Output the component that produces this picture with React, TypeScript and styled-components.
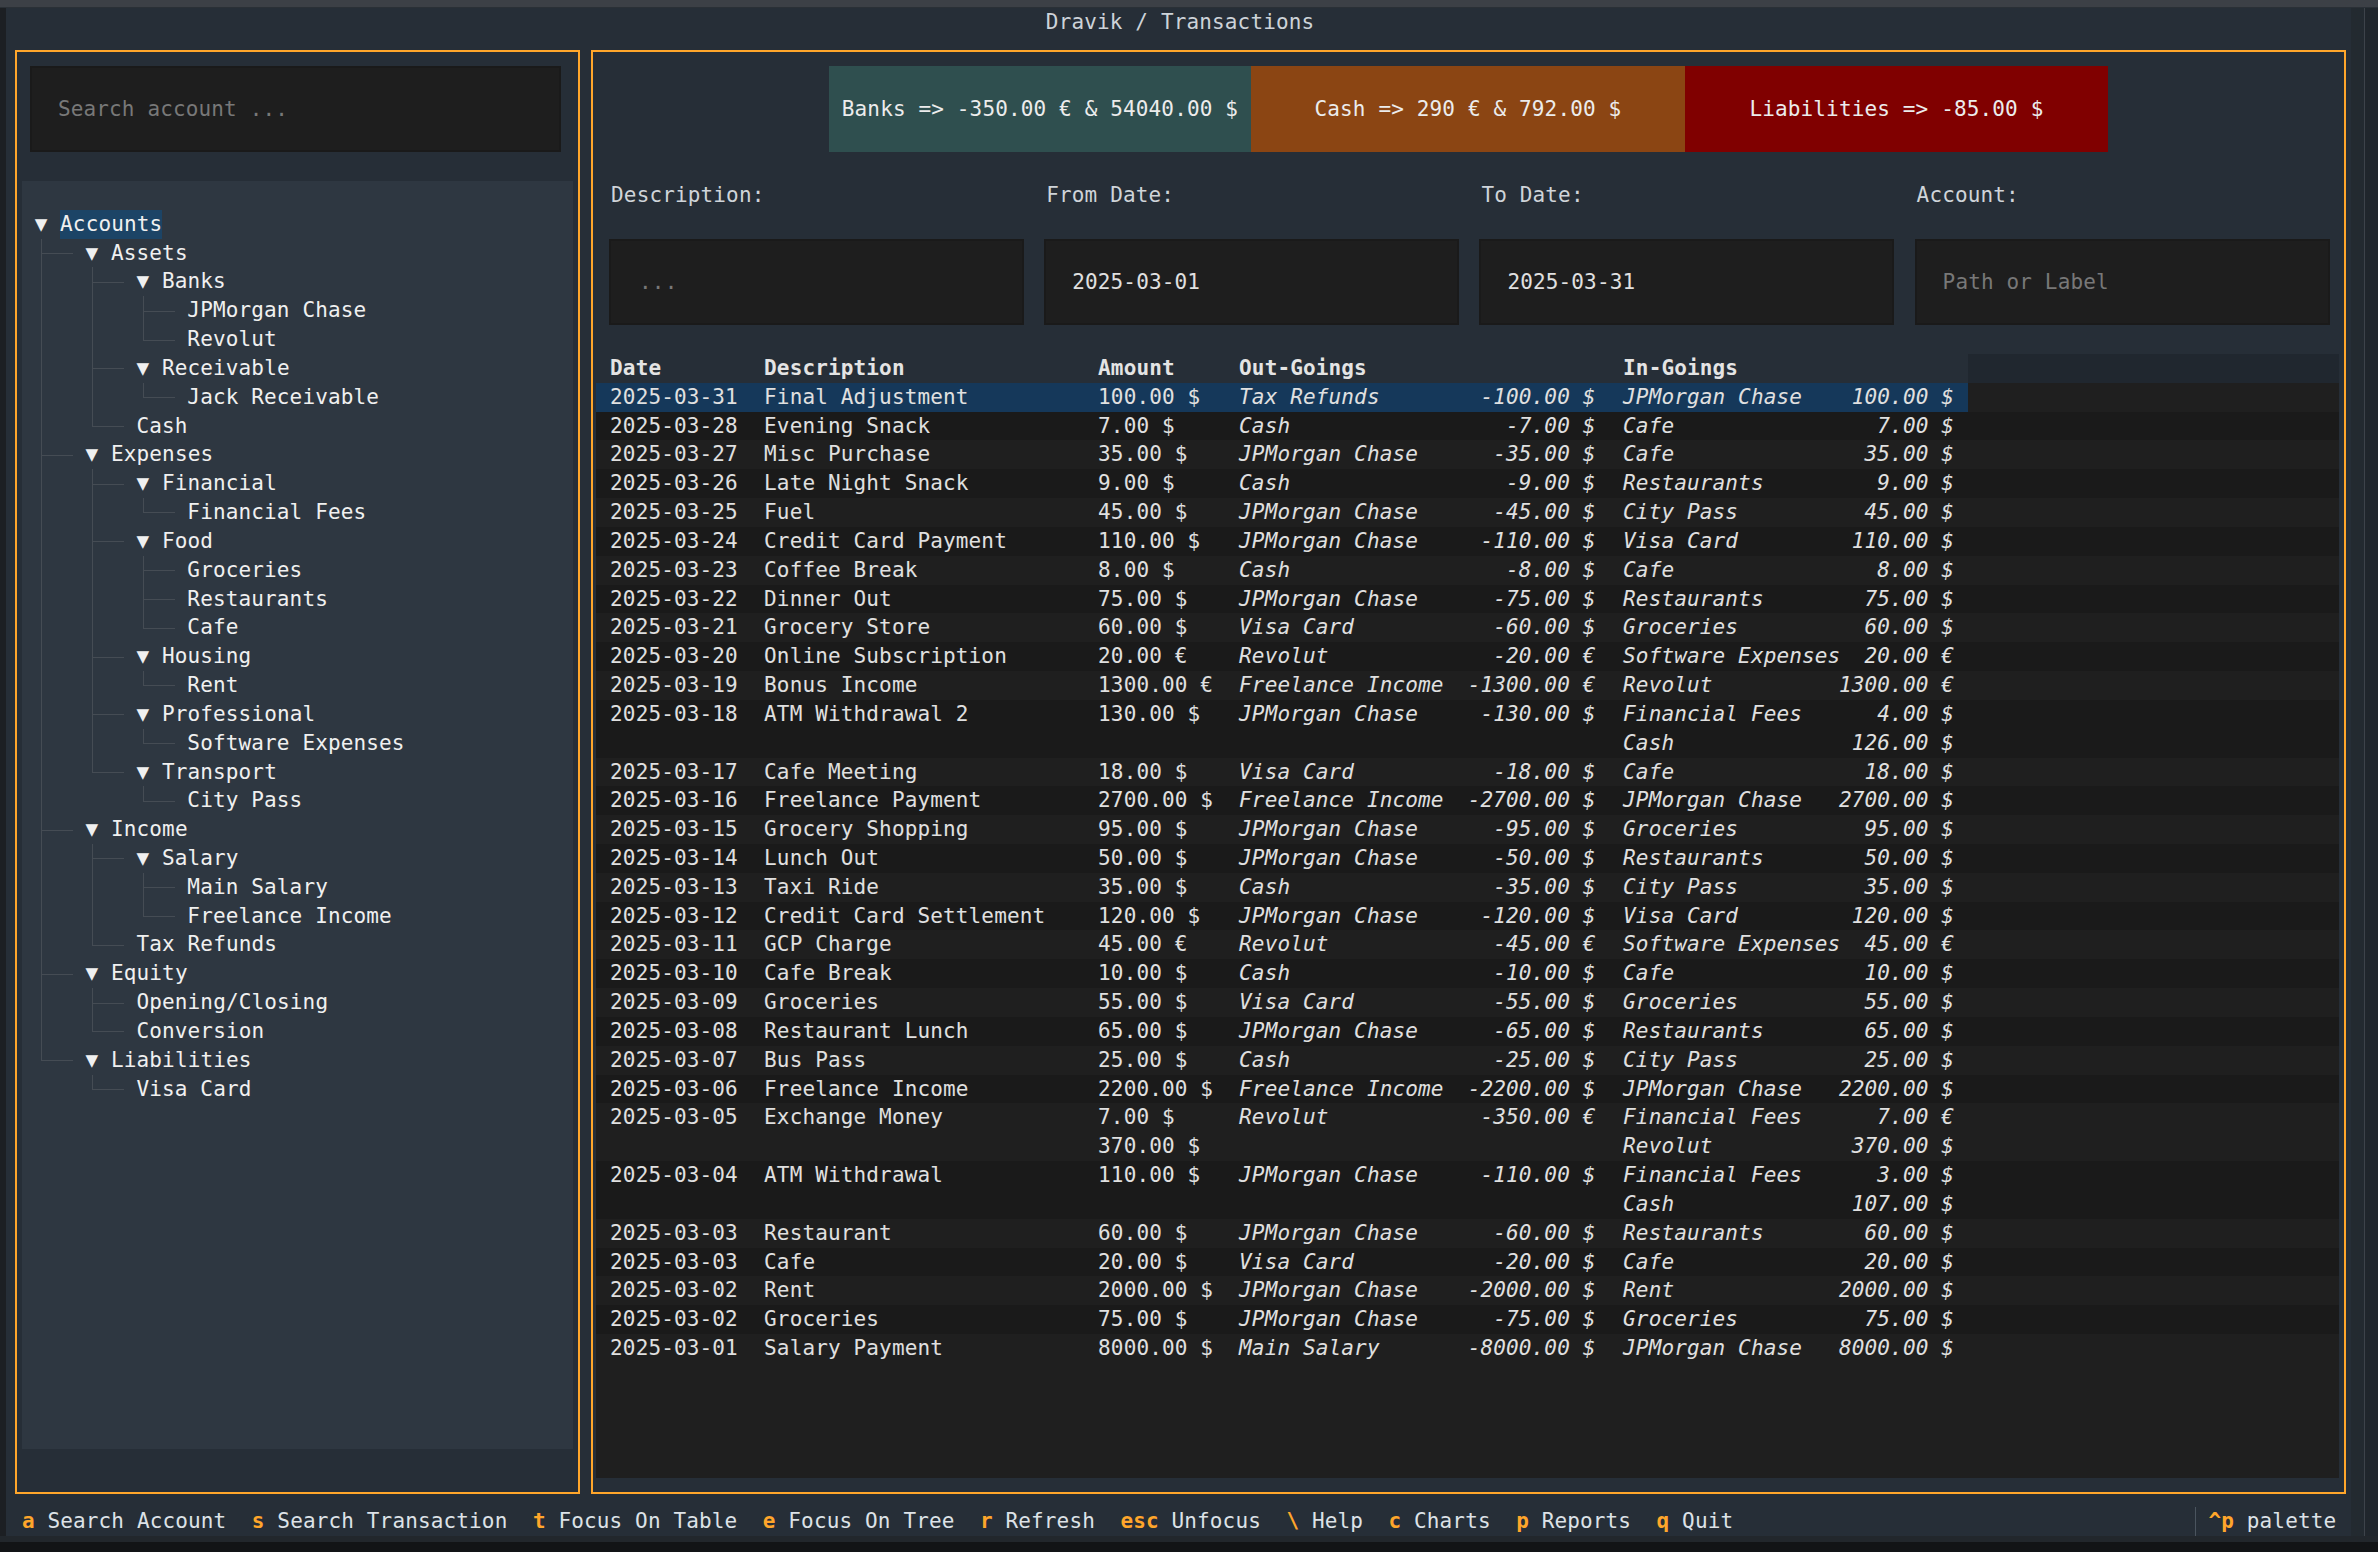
import React from 'react';
import styled, { createGlobalStyle, css } from 'styled-components';

// terminal cell metrics measured off the screenshot
const W = 12.73;
const H = 28.83;
const cw = (n: number) => `${(n * W).toFixed(2)}px`;
const rh = (n: number) => `${(n * H).toFixed(2)}px`;

const ORANGE = '#ffa62b';
const APP_BG = '#262e37';

const GlobalStyle = createGlobalStyle`
  html, body {
    margin: 0;
    padding: 0;
    background: #15171a;
  }
  body {
    font-family: "DejaVu Sans Mono", "Liberation Mono", monospace;
    font-size: 21px;
    letter-spacing: 0.14px;
    color: #e0e0e0;
  }
  #root {
    width: 2378px;
    height: 1552px;
    overflow: hidden;
  }
`;

const Screen = styled.div`
  width: 2378px;
  height: 1552px;
  display: flex;
  flex-direction: column;
  background: #15171a;
`;

const TopChrome = styled.div`
  height: 8px;
  flex: none;
  background: #3c4046;
  border-bottom: 1px solid #2a3036;
  box-sizing: border-box;
`;

const Middle = styled.div`
  display: flex;
  height: 1528px;
  flex: none;
`;

const LeftEdge = styled.div`
  width: 6px;
  flex: none;
  background: #1c1f23;
`;

const RightEdge = styled.div`
  flex: 1;
  display: flex;
  background: #20262c;
  border-left: 13px solid #232a30;
`;

const EdgeLine = styled.div`
  width: 1px;
  background: #3d434a;
  margin-right: 10px;
`;

const BottomChrome = styled.div`
  flex: 1;
  background: #121416;
  border-top: 6px solid #22272c;
`;

const Terminal = styled.div`
  width: 2345px;
  flex: none;
  padding: 0 0 0 3.2px;
  box-sizing: border-box;
  background: ${APP_BG};
  display: flex;
  flex-direction: column;
`;

const TitleBar = styled.div`
  height: ${rh(1)};
  line-height: ${rh(1)};
  text-align: center;
  color: #cdd3d9;
  white-space: pre;
`;

const Main = styled.div`
  display: flex;
  height: ${rh(51)};
`;

const Panel = styled.div<{ $cols: number }>`
  width: ${(p) => cw(p.$cols)};
  height: 100%;
  flex: none;
  box-sizing: border-box;
  padding: ${H / 2 - 1}px ${W / 2 - 1}px;
`;

const Frame = styled.div`
  height: 100%;
  box-sizing: border-box;
  border: 2px solid ${ORANGE};
  padding: ${H / 2 - 1}px ${W / 2 - 1}px;
  display: flex;
  flex-direction: column;
`;

const TextInput = styled.div<{ $placeholder?: boolean; $pad?: number }>`
  height: ${rh(3)};
  flex: none;
  box-sizing: border-box;
  background: #1e1e1e;
  border: 2px solid #1a1a1a;
  display: flex;
  align-items: center;
  padding-left: ${(p) => p.$pad ?? 26}px;
  color: ${(p) => (p.$placeholder ? '#787878' : '#e0e0e0')};
  white-space: pre;
`;

const SearchInput = styled(TextInput)`
  margin: 0 12px 0 8px;
`;

const Gap = styled.div<{ $rows?: number }>`
  height: ${(p) => rh(p.$rows ?? 1)};
  flex: none;
`;

/* ---------- account tree ---------- */

const TreeBox = styled.div`
  height: ${rh(44)};
  flex: none;
  background: #2e3741;
  padding: ${rh(1)} 0 0 ${cw(1)};
  box-sizing: border-box;
  color: #f0f0f0;
`;

const TreeRow = styled.div`
  display: flex;
  height: ${rh(1)};
  line-height: ${rh(1)};
  white-space: pre;
`;

type GuideKind = 'blank' | 'pipe' | 'tee' | 'elbow';

const GUIDE = '#454c54';

const Guide = styled.span<{ $kind: GuideKind }>`
  position: relative;
  flex: none;
  width: ${cw(4)};
  height: 100%;
  ${(p) =>
    p.$kind !== 'blank' &&
    css`
      &::before {
        content: '';
        position: absolute;
        left: ${W / 2}px;
        top: 0;
        width: 1px;
        height: ${p.$kind === 'elbow' ? '50%' : '100%'};
        background: ${GUIDE};
      }
    `}
  ${(p) =>
    (p.$kind === 'tee' || p.$kind === 'elbow') &&
    css`
      &::after {
        content: '';
        position: absolute;
        left: ${W / 2}px;
        top: 50%;
        width: ${W * 2.5}px;
        height: 1px;
        background: ${GUIDE};
      }
    `}
`;

const Toggle = styled.span`
  flex: none;
  width: ${cw(2)};
`;

const NodeLabel = styled.span<{ $active?: boolean }>`
  background: ${(p) => (p.$active ? '#1c4466' : 'transparent')};
`;

type Node = { label: string; children?: Node[] };

const leaf = (label: string): Node => ({ label });

const accounts: Node = {
  label: 'Accounts',
  children: [
    {
      label: 'Assets',
      children: [
        { label: 'Banks', children: [leaf('JPMorgan Chase'), leaf('Revolut')] },
        { label: 'Receivable', children: [leaf('Jack Receivable')] },
        leaf('Cash'),
      ],
    },
    {
      label: 'Expenses',
      children: [
        { label: 'Financial', children: [leaf('Financial Fees')] },
        { label: 'Food', children: [leaf('Groceries'), leaf('Restaurants'), leaf('Cafe')] },
        { label: 'Housing', children: [leaf('Rent')] },
        { label: 'Professional', children: [leaf('Software Expenses')] },
        { label: 'Transport', children: [leaf('City Pass')] },
      ],
    },
    {
      label: 'Income',
      children: [
        { label: 'Salary', children: [leaf('Main Salary'), leaf('Freelance Income')] },
        leaf('Tax Refunds'),
      ],
    },
    { label: 'Equity', children: [leaf('Opening/Closing'), leaf('Conversion')] },
    { label: 'Liabilities', children: [leaf('Visa Card')] },
  ],
};

type FlatNode = { label: string; guides: GuideKind[]; expandable: boolean };

function flatten(node: Node, prefix: GuideKind[], depth: number, isLast: boolean, out: FlatNode[]) {
  const guides: GuideKind[] = depth === 0 ? [] : [...prefix, isLast ? 'elbow' : 'tee'];
  out.push({ label: node.label, guides, expandable: !!node.children });
  const nextPrefix: GuideKind[] = depth === 0 ? [] : [...prefix, isLast ? 'blank' : 'pipe'];
  node.children?.forEach((c, i) =>
    flatten(c, nextPrefix, depth + 1, i === node.children!.length - 1, out)
  );
  return out;
}

const treeRows = flatten(accounts, [], 0, true, []);

const AccountTree = () => (
  <TreeBox>
    {treeRows.map((n, i) => (
      <TreeRow key={i}>
        {n.guides.map((g, j) => (
          <Guide key={j} $kind={g} />
        ))}
        {n.expandable && <Toggle>▼</Toggle>}
        <NodeLabel $active={i === 0}>{n.label}</NodeLabel>
      </TreeRow>
    ))}
  </TreeBox>
);

/* ---------- right side ---------- */

const SummaryRow = styled.div`
  height: ${rh(3)};
  flex: none;
  display: flex;
  justify-content: center;
`;

const SummaryBox = styled.div<{ $bg: string; $w: number }>`
  width: ${(p) => p.$w}px;
  background: ${(p) => p.$bg};
  display: flex;
  align-items: center;
  justify-content: center;
  color: #ececec;
  white-space: pre;
`;

const FilterGrid = styled.div<{ $rows: number }>`
  display: grid;
  grid-template-columns: repeat(4, 1fr);
  height: ${(p) => rh(p.$rows)};
  flex: none;
`;

const FieldLabel = styled.div`
  padding-left: 13px;
  line-height: ${rh(1)};
  color: #cfd4d9;
  white-space: pre;
`;

const FieldInput = styled(TextInput)`
  margin-left: 11px;
  width: 415px;
`;

const TableBox = styled.div`
  flex: 1;
  display: flex;
  flex-direction: column;
  background: #1f1f1f;
  margin-left: -2px;
`;

const COLS = [168, 334, 141, 384, 345];
const CELLS_W = COLS.reduce((a, b) => a + b, 0);

const HeaderRow = styled.div`
  display: flex;
  height: ${rh(1)};
  flex: none;
  background: #20272f;
`;

const RowCells = styled.div<{ $bg?: string }>`
  display: flex;
  width: ${CELLS_W}px;
  flex: none;
  background: ${(p) => p.$bg ?? 'transparent'};
`;

const HeadCell = styled.div<{ $w: number; $first?: boolean }>`
  width: ${(p) => p.$w}px;
  flex: none;
  box-sizing: border-box;
  padding-left: ${(p) => (p.$first ? 14 : 0)}px;
  line-height: ${rh(1)};
  font-weight: bold;
  color: #e4e4e4;
  background: ${APP_BG};
  white-space: pre;
`;

const DataRow = styled.div<{ $lines: number; $odd: boolean }>`
  display: flex;
  height: ${(p) => rh(p.$lines)};
  flex: none;
  background: ${(p) => (p.$odd ? '#1a1a1a' : '#1f1f1f')};
`;

const Cell = styled.div<{ $w: number; $first?: boolean; $italic?: boolean }>`
  width: ${(p) => p.$w}px;
  flex: none;
  box-sizing: border-box;
  padding-left: ${(p) => (p.$first ? 14 : 0)}px;
  line-height: ${rh(1)};
  font-style: ${(p) => (p.$italic ? 'italic' : 'normal')};
  white-space: pre;
`;

const Entry = styled.div<{ $chars: number }>`
  display: flex;
  justify-content: space-between;
  width: ${(p) => cw(p.$chars)};
`;

type Leg = [string, string];
type Tx = [string, string, string[], Leg[], Leg[]];

const txs: Tx[] = [
  ['2025-03-31', 'Final Adjustment', ['100.00 $'], [['Tax Refunds', '-100.00 $']], [['JPMorgan Chase', '100.00 $']]],
  ['2025-03-28', 'Evening Snack', ['7.00 $'], [['Cash', '-7.00 $']], [['Cafe', '7.00 $']]],
  ['2025-03-27', 'Misc Purchase', ['35.00 $'], [['JPMorgan Chase', '-35.00 $']], [['Cafe', '35.00 $']]],
  ['2025-03-26', 'Late Night Snack', ['9.00 $'], [['Cash', '-9.00 $']], [['Restaurants', '9.00 $']]],
  ['2025-03-25', 'Fuel', ['45.00 $'], [['JPMorgan Chase', '-45.00 $']], [['City Pass', '45.00 $']]],
  ['2025-03-24', 'Credit Card Payment', ['110.00 $'], [['JPMorgan Chase', '-110.00 $']], [['Visa Card', '110.00 $']]],
  ['2025-03-23', 'Coffee Break', ['8.00 $'], [['Cash', '-8.00 $']], [['Cafe', '8.00 $']]],
  ['2025-03-22', 'Dinner Out', ['75.00 $'], [['JPMorgan Chase', '-75.00 $']], [['Restaurants', '75.00 $']]],
  ['2025-03-21', 'Grocery Store', ['60.00 $'], [['Visa Card', '-60.00 $']], [['Groceries', '60.00 $']]],
  ['2025-03-20', 'Online Subscription', ['20.00 €'], [['Revolut', '-20.00 €']], [['Software Expenses', '20.00 €']]],
  ['2025-03-19', 'Bonus Income', ['1300.00 €'], [['Freelance Income', '-1300.00 €']], [['Revolut', '1300.00 €']]],
  ['2025-03-18', 'ATM Withdrawal 2', ['130.00 $'], [['JPMorgan Chase', '-130.00 $']], [['Financial Fees', '4.00 $'], ['Cash', '126.00 $']]],
  ['2025-03-17', 'Cafe Meeting', ['18.00 $'], [['Visa Card', '-18.00 $']], [['Cafe', '18.00 $']]],
  ['2025-03-16', 'Freelance Payment', ['2700.00 $'], [['Freelance Income', '-2700.00 $']], [['JPMorgan Chase', '2700.00 $']]],
  ['2025-03-15', 'Grocery Shopping', ['95.00 $'], [['JPMorgan Chase', '-95.00 $']], [['Groceries', '95.00 $']]],
  ['2025-03-14', 'Lunch Out', ['50.00 $'], [['JPMorgan Chase', '-50.00 $']], [['Restaurants', '50.00 $']]],
  ['2025-03-13', 'Taxi Ride', ['35.00 $'], [['Cash', '-35.00 $']], [['City Pass', '35.00 $']]],
  ['2025-03-12', 'Credit Card Settlement', ['120.00 $'], [['JPMorgan Chase', '-120.00 $']], [['Visa Card', '120.00 $']]],
  ['2025-03-11', 'GCP Charge', ['45.00 €'], [['Revolut', '-45.00 €']], [['Software Expenses', '45.00 €']]],
  ['2025-03-10', 'Cafe Break', ['10.00 $'], [['Cash', '-10.00 $']], [['Cafe', '10.00 $']]],
  ['2025-03-09', 'Groceries', ['55.00 $'], [['Visa Card', '-55.00 $']], [['Groceries', '55.00 $']]],
  ['2025-03-08', 'Restaurant Lunch', ['65.00 $'], [['JPMorgan Chase', '-65.00 $']], [['Restaurants', '65.00 $']]],
  ['2025-03-07', 'Bus Pass', ['25.00 $'], [['Cash', '-25.00 $']], [['City Pass', '25.00 $']]],
  ['2025-03-06', 'Freelance Income', ['2200.00 $'], [['Freelance Income', '-2200.00 $']], [['JPMorgan Chase', '2200.00 $']]],
  ['2025-03-05', 'Exchange Money', ['7.00 $', '370.00 $'], [['Revolut', '-350.00 €']], [['Financial Fees', '7.00 €'], ['Revolut', '370.00 $']]],
  ['2025-03-04', 'ATM Withdrawal', ['110.00 $'], [['JPMorgan Chase', '-110.00 $']], [['Financial Fees', '3.00 $'], ['Cash', '107.00 $']]],
  ['2025-03-03', 'Restaurant', ['60.00 $'], [['JPMorgan Chase', '-60.00 $']], [['Restaurants', '60.00 $']]],
  ['2025-03-03', 'Cafe', ['20.00 $'], [['Visa Card', '-20.00 $']], [['Cafe', '20.00 $']]],
  ['2025-03-02', 'Rent', ['2000.00 $'], [['JPMorgan Chase', '-2000.00 $']], [['Rent', '2000.00 $']]],
  ['2025-03-02', 'Groceries', ['75.00 $'], [['JPMorgan Chase', '-75.00 $']], [['Groceries', '75.00 $']]],
  ['2025-03-01', 'Salary Payment', ['8000.00 $'], [['Main Salary', '-8000.00 $']], [['JPMorgan Chase', '8000.00 $']]],
];

const TransactionTable = () => (
  <TableBox>
    <HeaderRow>
      <RowCells>
        {['Date', 'Description', 'Amount', 'Out-Goings', 'In-Goings'].map((h, i) => (
          <HeadCell key={h} $w={COLS[i]} $first={i === 0}>
            {h}
          </HeadCell>
        ))}
      </RowCells>
    </HeaderRow>
    {txs.map(([date, desc, amounts, outs, ins], i) => {
      const lines = Math.max(amounts.length, outs.length, ins.length);
      return (
        <DataRow key={i} $lines={lines} $odd={i % 2 === 1}>
          <RowCells $bg={i === 0 ? '#15385a' : undefined}>
            <Cell $w={COLS[0]} $first>{date}</Cell>
            <Cell $w={COLS[1]}>{desc}</Cell>
            <Cell $w={COLS[2]}>
              {amounts.map((a) => (
                <div key={a}>{a}</div>
              ))}
            </Cell>
            <Cell $w={COLS[3]} $italic>
              {outs.map(([name, amt]) => (
                <Entry key={name} $chars={28}>
                  <span>{name}</span>
                  <span>{amt}</span>
                </Entry>
              ))}
            </Cell>
            <Cell $w={COLS[4]} $italic>
              {ins.map(([name, amt]) => (
                <Entry key={name} $chars={26}>
                  <span>{name}</span>
                  <span>{amt}</span>
                </Entry>
              ))}
            </Cell>
          </RowCells>
        </DataRow>
      );
    })}
  </TableBox>
);

/* ---------- footer ---------- */

const FooterBar = styled.div`
  display: flex;
  height: ${rh(1)};
  line-height: ${rh(1)};
  white-space: pre;
  color: #dde2e7;
`;

const FooterItem = styled.div`
  padding: 0 ${W}px;
  display: flex;
  gap: ${W}px;
`;

const Key = styled.span`
  color: ${ORANGE};
  font-weight: bold;
`;

const PaletteItem = styled(FooterItem)`
  margin-left: auto;
  border-left: 1px solid #4a545e;
  margin-right: 2px;
`;

const bindings: [string, string][] = [
  ['a', 'Search Account'],
  ['s', 'Search Transaction'],
  ['t', 'Focus On Table'],
  ['e', 'Focus On Tree'],
  ['r', 'Refresh'],
  ['esc', 'Unfocus'],
  ['\\', 'Help'],
  ['c', 'Charts'],
  ['p', 'Reports'],
  ['q', 'Quit'],
];

export default function App() {
  return (
    <>
      <GlobalStyle />
      <Screen>
        <TopChrome />
        <Middle>
          <LeftEdge />
          <Terminal>
            <TitleBar>Dravik / Transactions</TitleBar>
            <Main>
              <Panel $cols={45.26}>
                <Frame>
                  <SearchInput $placeholder>Search account ...</SearchInput>
                  <Gap />
                  <AccountTree />
                </Frame>
              </Panel>
              <Panel $cols={138.74}>
                <Frame>
                  <SummaryRow>
                    <SummaryBox $bg="#2f4f4f" $w={422}>Banks =&gt; -350.00 € &amp; 54040.00 $</SummaryBox>
                    <SummaryBox $bg="#8b4513" $w={434}>Cash =&gt; 290 € &amp; 792.00 $</SummaryBox>
                    <SummaryBox $bg="#800000" $w={423}>Liabilities =&gt; -85.00 $</SummaryBox>
                  </SummaryRow>
                  <Gap />
                  <FilterGrid $rows={1}>
                    <FieldLabel>Description:</FieldLabel>
                    <FieldLabel>From Date:</FieldLabel>
                    <FieldLabel>To Date:</FieldLabel>
                    <FieldLabel>Account:</FieldLabel>
                  </FilterGrid>
                  <Gap />
                  <FilterGrid $rows={3}>
                    <FieldInput $placeholder $pad={28}>...</FieldInput>
                    <FieldInput $pad={26}>2025-03-01</FieldInput>
                    <FieldInput $pad={26}>2025-03-31</FieldInput>
                    <FieldInput $placeholder $pad={26}>Path or Label</FieldInput>
                  </FilterGrid>
                  <Gap />
                  <TransactionTable />
                </Frame>
              </Panel>
            </Main>
            <FooterBar>
              {bindings.map(([k, d]) => (
                <FooterItem key={k}>
                  <Key>{k}</Key>
                  <span>{d}</span>
                </FooterItem>
              ))}
              <PaletteItem>
                <Key>^p</Key>
                <span>palette</span>
              </PaletteItem>
            </FooterBar>
          </Terminal>
          <RightEdge>
            <EdgeLine />
          </RightEdge>
        </Middle>
        <BottomChrome />
      </Screen>
    </>
  );
}
